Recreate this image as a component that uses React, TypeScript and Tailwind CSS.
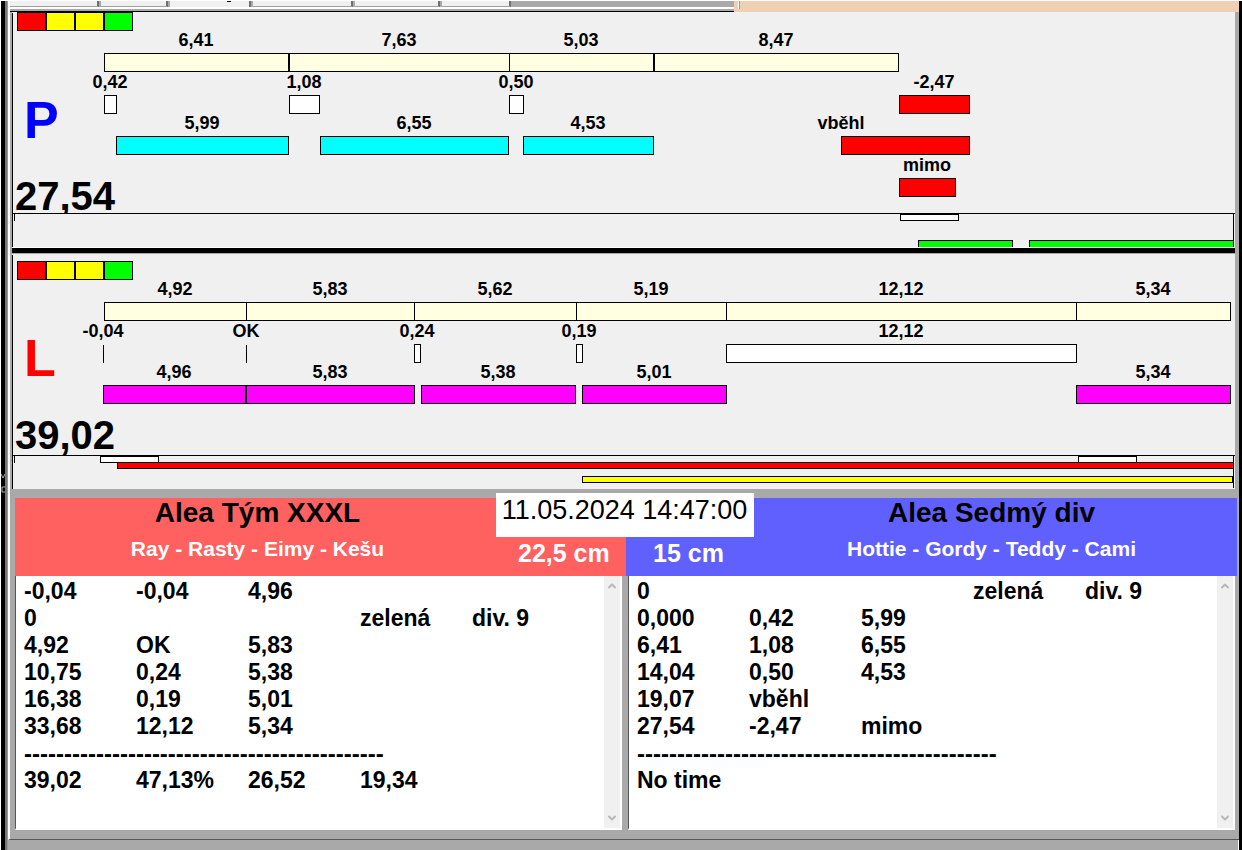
import React from "react";
import { ChevronDown, ChevronUp } from "lucide-react";

type Bar = {
  from: number;
  to: number;
  label?: string;
  labelAt?: number;
  fill?: string;
};

type Lane = {
  fill: string;
  bars: Bar[];
};

type Mark = {
  from: number;
  to: number;
  top: number;
  fill: string;
  height?: number;
};

type Track = {
  letter: string;
  letterColor: string;
  letterY: number;
  total: string;
  totalY: number;
  offset: number;
  lanes: Lane[];
  marks: Mark[];
};

// chart units, turned into percents so the tracks stretch with the window
const CHART_START = 12;
const CHART_WIDTH = 1223;
const LANE_STEP = [41, 83, 124, 166];

const RED = "#ff0000";
const YELLOW = "#ffff00";
const GREEN = "#00ff00";
const CREAM = "#ffffe1";
const CYAN = "#00ffff";
const MAGENTA = "#ff00ff";
const WHITE = "#ffffff";

const lights = [RED, YELLOW, YELLOW, GREEN];

const rightTrack: Track = {
  letter: "P",
  letterColor: "#0000ff",
  letterY: 126,
  total: "27,54",
  totalY: 198,
  offset: 0,
  lanes: [
    {
      fill: CREAM,
      bars: [
        { from: 104, to: 288, label: "6,41" },
        { from: 289, to: 509, label: "7,63" },
        { from: 509, to: 653, label: "5,03" },
        { from: 654, to: 898, label: "8,47" },
      ],
    },
    {
      fill: WHITE,
      bars: [
        { from: 104, to: 116, label: "0,42" },
        { from: 289, to: 319, label: "1,08" },
        { from: 509, to: 523, label: "0,50" },
        { from: 899, to: 969, label: "-2,47", fill: RED },
      ],
    },
    {
      fill: CYAN,
      bars: [
        { from: 116, to: 288, label: "5,99" },
        { from: 320, to: 508, label: "6,55" },
        { from: 523, to: 653, label: "4,53" },
        { from: 841, to: 969, label: "vběhl", labelAt: 841, fill: RED },
      ],
    },
    {
      fill: RED,
      bars: [{ from: 899, to: 955, label: "mimo" }],
    },
  ],
  marks: [
    { from: 900, to: 958, top: 202, fill: WHITE },
    { from: 918, to: 1012, top: 228, fill: GREEN, height: 10 },
    { from: 1029, to: 1233, top: 228, fill: GREEN, height: 10 },
  ],
};

const leftTrack: Track = {
  letter: "L",
  letterColor: "#ff0000",
  letterY: 122,
  total: "39,02",
  totalY: 195,
  offset: 7,
  lanes: [
    {
      fill: CREAM,
      bars: [
        { from: 104, to: 246, label: "4,92" },
        { from: 246, to: 414, label: "5,83" },
        { from: 414, to: 576, label: "5,62" },
        { from: 576, to: 726, label: "5,19" },
        { from: 726, to: 1076, label: "12,12" },
        { from: 1076, to: 1230, label: "5,34" },
      ],
    },
    {
      fill: WHITE,
      bars: [
        { from: 103, to: 103, label: "-0,04" },
        { from: 246, to: 246, label: "OK" },
        { from: 414, to: 420, label: "0,24" },
        { from: 576, to: 582, label: "0,19" },
        { from: 726, to: 1076, label: "12,12" },
      ],
    },
    {
      fill: MAGENTA,
      bars: [
        { from: 103, to: 245, label: "4,96" },
        { from: 246, to: 414, label: "5,83" },
        { from: 421, to: 575, label: "5,38" },
        { from: 582, to: 726, label: "5,01" },
        { from: 1076, to: 1230, label: "5,34" },
      ],
    },
  ],
  marks: [
    { from: 100, to: 158, top: 202, fill: WHITE },
    { from: 1078, to: 1136, top: 202, fill: WHITE },
    { from: 117, to: 1233, top: 208, fill: RED },
    { from: 582, to: 1232, top: 222, fill: YELLOW },
  ],
};

const dashes = "-".repeat(45);

const leftLog = [
  ["-0,04", "-0,04", "4,96", "", ""],
  ["0", "", "", "zelená", "div. 9"],
  ["4,92", "OK", "5,83", "", ""],
  ["10,75", "0,24", "5,38", "", ""],
  ["16,38", "0,19", "5,01", "", ""],
  ["33,68", "12,12", "5,34", "", ""],
  [dashes],
  ["39,02", "47,13%", "26,52", "19,34", ""],
];

const rightLog = [
  ["0", "", "", "zelená", "div. 9"],
  ["0,000", "0,42", "5,99", "", ""],
  ["6,41", "1,08", "6,55", "", ""],
  ["14,04", "0,50", "4,53", "", ""],
  ["19,07", "vběhl", "", "", ""],
  ["27,54", "-2,47", "mimo", "", ""],
  [dashes],
  ["No time", "", "", "", ""],
];

const at = (x: number) => `${((x - CHART_START) / CHART_WIDTH) * 100}%`;
const span = (from: number, to: number) =>
  `${((to - from) / CHART_WIDTH) * 100}%`;

const TrackChart = ({ track }: { track: Track }) => {
  return (
    <svg
      className="block h-[235px] w-full overflow-hidden bg-[#f0f0f0] font-bold"
      shapeRendering="crispEdges"
    >
      <g transform="translate(0.5 0.5)" stroke="black">
        {lights.map((color, index) => (
          <rect
            key={index}
            x={5 + index * 29}
            y={track.offset}
            width={28}
            height={18}
            fill={color}
          />
        ))}
        {track.lanes.map((lane, row) =>
          lane.bars.map((bar) =>
            bar.from === bar.to ? (
              <line
                key={bar.from}
                x1={at(bar.from)}
                x2={at(bar.from)}
                y1={LANE_STEP[row] + track.offset}
                y2={LANE_STEP[row] + track.offset + 18}
              />
            ) : (
              <rect
                key={bar.from}
                x={at(bar.from)}
                y={LANE_STEP[row] + track.offset}
                width={span(bar.from, bar.to)}
                height={18}
                fill={bar.fill || lane.fill}
              />
            )
          )
        )}
      </g>
      {track.lanes.map((lane, row) =>
        lane.bars.map((bar) => (
          <text
            key={bar.from}
            x={at(bar.labelAt || (bar.from + bar.to) / 2)}
            y={LANE_STEP[row] + track.offset - 7}
            textAnchor="middle"
            className="text-[18px]"
          >
            {bar.label}
          </text>
        ))
      )}
      <text
        x={12}
        y={track.letterY}
        fill={track.letterColor}
        className="text-[52px]"
      >
        {track.letter}
      </text>
      <text x={3} y={track.totalY} className="text-[40px]">
        {track.total}
      </text>
      {/* overview strip */}
      <rect x={0} y={201} width="100%" height={34} fill="#f0f0f0" />
      <g transform="translate(0.5 0.5)" stroke="black">
        <line x1={0} x2="100%" y1={201} y2={201} />
        <line x1={2} x2={2} y1={201} y2={208} />
        <line x1={at(1233)} x2={at(1233)} y1={201} y2={233} />
        {track.marks.map((mark) => (
          <rect
            key={mark.from}
            x={at(mark.from)}
            y={mark.top}
            width={span(mark.from, mark.to)}
            height={mark.height || 6}
            fill={mark.fill}
          />
        ))}
        <line x1={0} x2={0} y1={0} y2={235} />
      </g>
    </svg>
  );
};

const Log = ({ rows }: { rows: string[][] }) => {
  return (
    <div className="flex min-w-0 flex-1 border-b-2 border-l border-r-2 border-b-white border-l-[#555555] border-r-white bg-white">
      <div className="min-w-0 flex-1 overflow-hidden pl-2 pt-0.5">
        <table className="w-[560px] table-fixed text-[23px] font-bold leading-[27px]">
          <tbody>
            {rows.map((row, index) => (
              <tr key={index}>
                {row.length === 1 ? (
                  <td colSpan={5} className="p-0 text-[24px]">
                    {row[0]}
                  </td>
                ) : (
                  row.map((cell, column) => (
                    <td key={column} className="whitespace-nowrap p-0">
                      {cell}
                    </td>
                  ))
                )}
              </tr>
            ))}
          </tbody>
        </table>
      </div>
      <div className="flex w-4 flex-col items-center justify-between bg-[#f0f0f0] py-1 text-[#b8b8b8]">
        <button type="button" aria-label="Scroll up">
          <ChevronUp size={12} strokeWidth={4} />
        </button>
        <button type="button" aria-label="Scroll down">
          <ChevronDown size={12} strokeWidth={4} />
        </button>
      </div>
    </div>
  );
};

const TabStrip = () => {
  const tab =
    "h-[6px] border-b border-r-2 border-b-[#a0a0a0] border-r-[#707070] bg-[#f0f0f0]";
  return (
    <div className="flex h-[11px]">
      <div className="flex w-[724px] flex-col border-b border-black bg-[#a9a9a9]">
        <div className="flex h-[6px] gap-[2px]">
          <div className={`${tab} w-[89px]`}></div>
          <div className={`${tab} w-[67px] border-r-0`}></div>
          <div className="flex h-[6px] w-[81px] justify-end border-r-2 border-[#707070] bg-[#f0f0f0] pr-[18px]">
            <div className="h-px w-1 bg-black"></div>
          </div>
          <div className={`${tab} w-[100px]`}></div>
          <div className={`${tab} w-[85px]`}></div>
          <div className={`${tab} w-[69px]`}></div>
        </div>
        <div className="h-[2px] bg-white"></div>
      </div>
      <div className="flex-1 bg-[#efd0b5] pl-1">
        <div className="h-2 w-[2px] border-r border-[#b89a80] bg-white"></div>
      </div>
    </div>
  );
};

const App = () => {
  return (
    <div className="flex min-h-screen border-l border-t border-white bg-[#a9a9a9] font-['Liberation_Sans',Arial,sans-serif] text-black">
      <div className="w-1 bg-black pt-[472px]">
        <svg width="4" height="22" stroke="#b0b0b0" fill="none">
          <path d="M0 1 L2 5 L4 1 M4 14 H1 V19 H4" />
        </svg>
      </div>
      <div className="w-[3px] border-r border-[#999999] bg-[#777777]"></div>
      <div className="flex min-w-0 flex-1 flex-col">
        <div className="flex flex-1 flex-col border-b border-l-2 border-b-[#555555] border-l-white pb-[9px]">
          <TabStrip />
          <div className="pl-[2px] pr-1">
            <TrackChart track={rightTrack} />
            <div className="h-[7px] border-b border-t border-b-[#a9a9a9] border-t-white bg-black"></div>
            <TrackChart track={leftTrack} />
          </div>
          <div className="relative mt-[9px] flex h-[78px] pl-[5px] pr-[2px] font-bold">
            <div className="flex flex-1 bg-[#ff6060]">
              <div className="flex-1 text-center">
                <h2 className="text-[28px] leading-[30px]">Alea Tým XXXL</h2>
                <p className="mt-[6px] text-[21px] leading-[30px] text-white">
                  Ray - Rasty - Eimy - Kešu
                </p>
              </div>
              <p className="w-[126px] pl-[18px] pt-10 text-[25px] leading-[30px] text-white">
                22,5 cm
              </p>
            </div>
            <div className="flex flex-1 bg-[#6060ff]">
              <p className="w-[130px] pl-[27px] pt-10 text-[25px] leading-[30px] text-white">
                15 cm
              </p>
              <div className="flex-1 pr-[10px] text-center">
                <h2 className="text-[28px] leading-[30px]">Alea Sedmý div</h2>
                <p className="mt-[6px] text-[21px] leading-[30px] text-white">
                  Hottie - Gordy - Teddy - Cami
                </p>
              </div>
            </div>
            <time className="absolute -top-[5px] left-1/2 h-11 w-[258px] -translate-x-1/2 whitespace-nowrap bg-white pt-[2px] text-center text-[27px] font-normal leading-[30px]">
              11.05.2024 14:47:00
            </time>
          </div>
          <div className="flex flex-1 gap-[6px] pl-[5px] pr-1">
            <Log rows={leftLog} />
            <Log rows={rightLog} />
          </div>
        </div>
        <div className="h-[10px] border-r border-white"></div>
      </div>
      <div className="w-[3px] bg-black"></div>
    </div>
  );
};

export default App;
